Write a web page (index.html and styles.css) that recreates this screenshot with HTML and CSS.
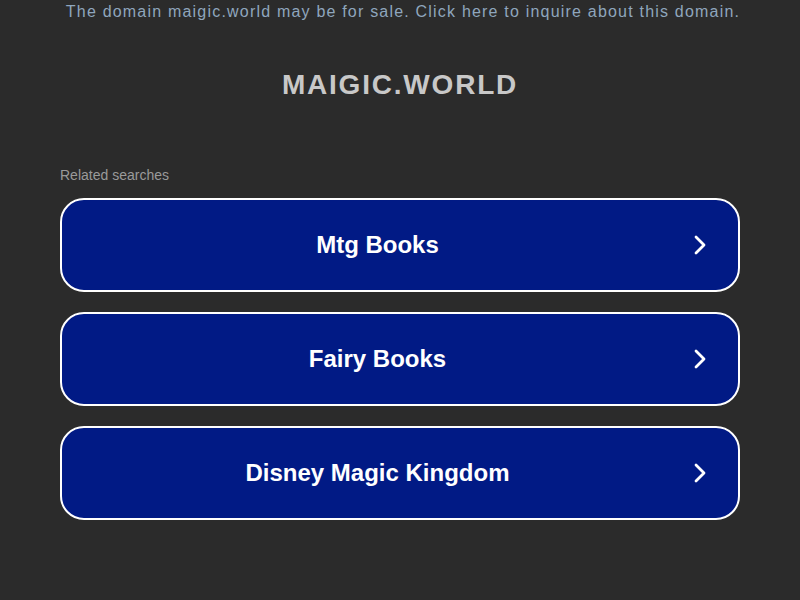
FILE: index.html
```html
<!DOCTYPE html>
<html>
<head>
<meta charset="utf-8">
<link rel="stylesheet" href="styles.css">
</head>
<body>
<div class="page">
  <div class="banner">The domain maigic.world may be for sale. Click here to inquire about this domain.</div>
  <h1 class="title">MAIGIC.WORLD</h1>
  <div class="related">Related searches</div>
  <div class="list">
    <a class="item"><span class="label">Mtg Books</span><svg class="chev" viewBox="0 0 14 24" width="14" height="24"><path d="M3 4 L11 12 L3 20" fill="none" stroke="#fff" stroke-width="2.8" stroke-linecap="round" stroke-linejoin="round"/></svg></a>
    <a class="item"><span class="label">Fairy Books</span><svg class="chev" viewBox="0 0 14 24" width="14" height="24"><path d="M3 4 L11 12 L3 20" fill="none" stroke="#fff" stroke-width="2.8" stroke-linecap="round" stroke-linejoin="round"/></svg></a>
    <a class="item"><span class="label">Disney Magic Kingdom</span><svg class="chev" viewBox="0 0 14 24" width="14" height="24"><path d="M3 4 L11 12 L3 20" fill="none" stroke="#fff" stroke-width="2.8" stroke-linecap="round" stroke-linejoin="round"/></svg></a>
  </div>
</div>
</body>
</html>
```

FILE: styles.css
```css
html, body {
  margin: 0;
  padding: 0;
  background: #2b2b2b;
  font-family: "Liberation Sans", Arial, sans-serif;
}
.page {
  width: 680px;
  margin: 0 auto;
  display: flex;
  flex-direction: column;
}
.banner {
  text-align: center;
  color: #8fa6bd;
  font-size: 16px;
  letter-spacing: 1.2px;
  line-height: 24px;
  white-space: nowrap;
  margin: 0 -23px 0 -17px;
}
.title {
  margin: 41px 0 0;
  text-align: center;
  color: #c8c8c8;
  font-size: 28px;
  font-weight: bold;
  letter-spacing: 1.8px;
  line-height: 40px;
}
.related {
  margin-top: 60px;
  color: #9a9a9a;
  font-size: 14px;
  line-height: 20px;
}
.list {
  margin-top: 13px;
  display: flex;
  flex-direction: column;
  gap: 20px;
}
.item {
  height: 90px;
  border: 2px solid #fff;
  border-radius: 24px;
  background: #011a85;
  display: flex;
  align-items: center;
  padding: 0 31px 0 0;
  color: #fff;
}
.label {
  flex: 1;
  text-align: center;
  font-size: 24px;
  font-weight: bold;
}
.chev {
  display: block;
}
```
